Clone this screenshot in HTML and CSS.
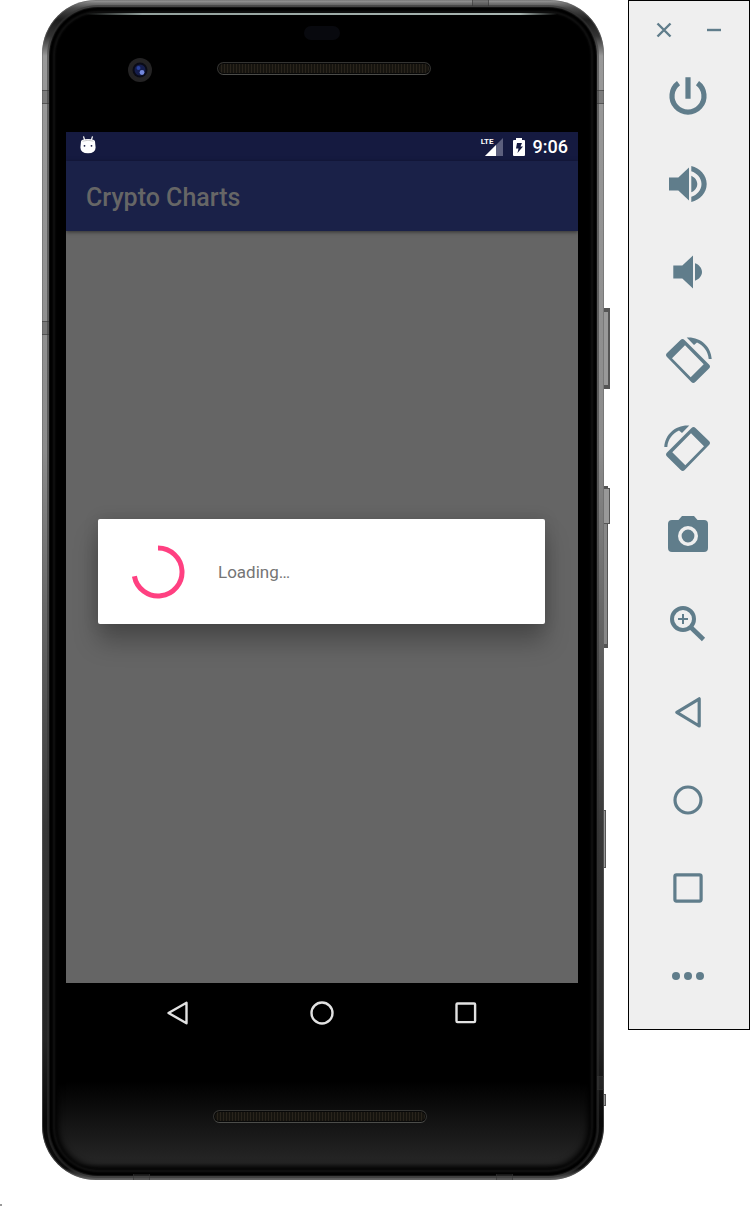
FILE: index.html
```html
<!DOCTYPE html>
<html lang="en">
<head>
<meta charset="utf-8">
<meta name="viewport" content="width=device-width, initial-scale=1">
<title>Crypto Charts</title>
<link rel="stylesheet" href="styles.css">
</head>
<body>
<main class="desk">
  <section class="phone" aria-label="Phone">
    <span class="side-key power-key"></span>
    <span class="side-key volume-key"></span>
    <span class="side-key volume-tip"></span>
    <span class="side-key nub-upper"></span>
    <span class="side-key nub-lower"></span>
    <div class="glass">
      <div class="forehead">
        <span class="sensor"></span>
        <div class="front">
          <svg class="camera" viewBox="0 0 24 24" aria-hidden="true">
            <circle cx="12" cy="12" r="12" fill="#242324"/>
            <circle cx="12" cy="12" r="7.5" fill="#0a0b16"/>
            <circle cx="12" cy="12" r="5.5" fill="#151d4c"/>
            <circle cx="10.5" cy="10" r="2" fill="#2a429c"/>
            <circle cx="14" cy="14.5" r="2.4" fill="#7488dc"/>
          </svg>
          <span class="speaker"></span>
        </div>
      </div>
      <div class="screen">
        <div class="status">
          <svg class="robot" viewBox="0 0 16 18" aria-hidden="true">
            <path d="M3.5.3 4.600 4M12.500.3 11.400 4" stroke="#fff" stroke-width="1.200"/>
            <path d="M1 5.500Q1 3 8 3t7 2.500l.6 6Q15.500 17.300 8 17.300T.4 11.500z" fill="#fff"/>
            <path d="M2.500 5.200Q8 3.400 13.500 5.200" fill="none" stroke="#ccc" stroke-width="1"/>
            <circle cx="4.500" cy="9.800" r=".9" fill="#151a40"/><circle cx="11.500" cy="9.800" r=".9" fill="#151a40"/>
          </svg>
          <div class="signal">
            <span class="lte">LTE</span>
            <svg viewBox="0 0 18 18" aria-hidden="true"><path d="M18 0V18H0z" fill="#5c5f7d"/><path d="M11 7V18H0z" fill="#fff"/></svg>
          </div>
          <svg class="battery" viewBox="0 0 12 18" aria-hidden="true">
            <path d="M3 0h6v2h2q1 0 1 1v14q0 1-1 1H1q-1 0-1-1V3q0-1 1-1h2z" fill="#fff"/>
            <path d="M4 5h5L7.500 8.500H10L4.500 15l1-4.500H3z" fill="#151a40"/>
          </svg>
          <span class="clock">9:06</span>
        </div>
        <header class="appbar"><h1>Crypto Charts</h1></header>
        <div class="content">
          <div class="dialog" role="dialog" aria-label="Loading">
            <svg class="spinner" viewBox="0 0 54 54" aria-hidden="true"><path d="M27 3A24 24 0 1 1 3.400 31.200" fill="none" stroke="#ff4081" stroke-width="5"/></svg>
            <p>Loading…</p>
          </div>
        </div>
        <nav class="keys" aria-label="Navigation">
          <button type="button" aria-label="Back"><svg viewBox="0 0 24 24"><path d="M2.500 12 20.500 1.800V22.200z"/></svg></button>
          <button type="button" aria-label="Home"><svg viewBox="0 0 24 24"><circle cx="12" cy="12" r="10.500"/></svg></button>
          <button type="button" aria-label="Recent apps"><svg viewBox="0 0 24 24"><rect x="2.500" y="2.500" width="18.600" height="18.600" rx="1"/></svg></button>
        </nav>
      </div>
      <div class="chin"><span class="speaker"></span></div>
    </div>
    <span class="band band-left-top"></span>
    <span class="band band-left-mid"></span>
    <span class="band band-right-top"></span>
    <span class="band band-right-low"></span>
    <span class="band band-top-right"></span>
    <span class="band band-bottom-left"></span>
    <span class="band band-bottom-right"></span>
  </section>

  <aside class="tools" aria-label="Emulator controls">
    <div class="window">
      <button type="button" aria-label="Close"><svg viewBox="0 0 16 16"><path d="M1.500 1.500l13 13M14.500 1.500l-13 13"/></svg></button>
      <button type="button" aria-label="Minimize"><svg viewBox="0 0 16 16"><path d="M1 8h14"/></svg></button>
    </div>
    <div class="actions">
      <button type="button" aria-label="Power"><svg viewBox="0 0 48 48"><path class="line" stroke-width="5.200" d="M14.500 11.200A16 16 0 1 0 33.500 11.200M24 5.300V26.700"/></svg></button>
      <button type="button" aria-label="Volume up"><svg viewBox="0 0 48 48"><path d="M5 17.500h9.300L25 7.500v33L14.300 30.500H5zM27.300 15.700c3.500 1.500 6 4.600 6 8.300s-2.500 6.800-6 8.300zM27.300 6C36 8 42.700 15.300 42.700 24S36 40 27.300 42V36.800C33 35 37.500 30 37.500 24S33 13 27.300 11.200z"/></svg></button>
      <button type="button" aria-label="Volume down"><svg viewBox="0 0 48 48"><path d="M9.300 17.600h9L29 7.600V40.400L18.300 30.400h-9zM31 15.300c4 1.300 7 4.800 7 8.700s-3 7.400-7 8.700z"/></svg></button>
      <button type="button" aria-label="Rotate left"><svg viewBox="0 0 48 48"><path fill-rule="evenodd" d="M16.500 4Q18.500 2 20.500 4L45 28.500Q47 30.500 45 32.500L31.300 46Q29.300 48 27.300 46L3 21Q1 19 3 17zM21 9.300 8 22.300 26.700 41.300 39.700 28.300z"/><path d="M22.700 1.500C36 .5 47 10 47.700 23h-3C44 15 39.500 9.500 33 6.500L30 9z"/></svg></button>
      <button type="button" aria-label="Rotate right"><svg viewBox="0 0 48 48"><g transform="matrix(-1 0 0 1 48 0)"><path fill-rule="evenodd" d="M16.500 4Q18.500 2 20.500 4L45 28.500Q47 30.500 45 32.500L31.300 46Q29.300 48 27.300 46L3 21Q1 19 3 17zM21 9.300 8 22.300 26.700 41.300 39.700 28.300z"/><path d="M22.700 1.500C36 .5 47 10 47.700 23h-3C44 15 39.500 9.500 33 6.500L30 9z"/></g></svg></button>
      <button type="button" aria-label="Take screenshot"><svg viewBox="0 0 48 48"><path d="M8 8h6.500L18 4h12l3.500 4H40q4 0 4 4v24q0 4-4 4H8q-4 0-4-4V12q0-4 4-4z"/><circle cx="24" cy="24" r="8.200" fill="none" stroke="#efefef" stroke-width="3.600"/></svg></button>
      <button type="button" aria-label="Zoom"><svg viewBox="0 0 48 48"><circle class="line" cx="19" cy="19" r="11" stroke-width="4"/><path class="line" stroke-width="2" d="M14 19h10M19 14v10"/><path class="line" stroke-width="4.600" d="M27 27.500 39.500 39.500"/></svg></button>
      <button type="button" aria-label="Back"><svg viewBox="0 0 48 48"><path class="line" stroke-width="3.200" stroke-linejoin="round" d="M12.800 24.300 35.200 10.800V38z"/></svg></button>
      <button type="button" aria-label="Home"><svg viewBox="0 0 48 48"><circle class="line" cx="24" cy="24" r="13" stroke-width="3.200"/></svg></button>
      <button type="button" aria-label="Overview"><svg viewBox="0 0 48 48"><rect class="line" x="10.900" y="10.900" width="26.200" height="26.200" rx="1.500" stroke-width="3.200"/></svg></button>
      <button type="button" aria-label="More"><svg viewBox="0 0 48 48"><circle cx="12" cy="24" r="4"/><circle cx="24" cy="24" r="4"/><circle cx="36" cy="24" r="4"/></svg></button>
    </div>
  </aside>
</main>
<span class="speck"></span>
</body>
</html>
```

FILE: styles.css
```css
* {
  box-sizing: border-box;
}

body {
  margin: 0;
  background: #fff;
  font-family: Roboto, sans-serif;
}

button {
  display: flex;
  align-items: center;
  justify-content: center;
  padding: 0;
  border: 0;
  background: none;
}

svg {
  display: block;
}

.desk {
  display: flex;
  align-items: flex-start;
  gap: 24px;
  padding-left: 42px;
}

/* Handset body */
.phone {
  position: relative;
  display: flex;
  flex: 1;
  min-width: 0;
  min-height: calc(100vh - 26px);
  padding: 8px 8px 5px;
  border-radius: 54px;
  background: linear-gradient(#a3a3a3 0, #777 3px, #4a4a4a 8px, #1c1c1c 20px, #333 36px, #999 56px, #8c8c8c 38%, #666 52%, #383838 70%, #242424 88%, #080808 95%, #0c0c0c 99%, #666 100%);
  box-shadow: inset 0 0 0 1px #66666688;
}

.glass {
  display: flex;
  flex: 1;
  flex-direction: column;
  min-width: 0;
  padding: 0 18px 0 16px;
  border-radius: 48px;
  background: linear-gradient(#000 0, #000 92%, #161616 96%, #262626 99%, #050505 100%);
  box-shadow: 0 0 0 1px #111, 0 0 0 3px #33333388, inset 0 0 2px 3px #000, inset 0 0 2px 5px #141414, inset 0 0 6px 8px #000;
}

.forehead {
  display: flex;
  flex-direction: column;
  align-items: center;
  height: 124px;
  background: linear-gradient(90deg, #0000, #93a19d 12%, #a9b6b2 92%, #0000) center 5px / 92% 2px no-repeat;
}

.sensor {
  width: 36px;
  height: 14px;
  margin: 18px 0;
  border-radius: 7px;
  background: #08090e;
}

.front {
  display: grid;
  grid-template-columns: 1fr auto 1fr;
  align-items: center;
  width: 100%;
  padding-left: 4px;
}

.camera {
  width: 24px;
  margin-left: 58px;
}

.speaker {
  width: 214px;
  height: 13px;
  border: 1px solid #343432;
  border-bottom-color: #4c4d4a;
  border-radius: 7px;
  background: repeating-linear-gradient(90deg, #29241c 0, #29241c 1px, #16140f 1px, #16140f 3px);
  box-shadow: inset 0 0 0 1px #080808;
}

.front .speaker {
  margin-bottom: 4px;
}

.chin {
  display: flex;
  align-items: flex-end;
  justify-content: center;
  height: 132px;
  padding: 0 4px 52px 0;
}

/* Frame details laid over the body */
.side-key {
  position: absolute;
  left: 100%;
  border: 1px solid #555;
  border-left: 0;
  background: #999;
}

.power-key {
  top: 308px;
  width: 6px;
  height: 81px;
  border-width: 4px 2px 4px 0;
}

.volume-key {
  top: 486px;
  width: 4px;
  height: 162px;
  border-width: 4px 1px 4px 0;
  background: #888;
}

.volume-tip {
  top: 488px;
  width: 6px;
  height: 36px;
}

.nub-upper {
  top: 810px;
  width: 2px;
  height: 58px;
}

.nub-lower {
  top: 1094px;
  width: 2px;
  height: 12px;
}

.band {
  position: absolute;
  width: 7px;
  height: 14px;
  border: solid #3338;
  border-width: 1px 0;
  background: #4445;
}

.band-left-top {
  top: 90px;
  left: 0;
}

.band-left-mid {
  top: 321px;
  left: 0;
}

.band-right-top {
  top: 90px;
  right: 0;
}

.band-right-low {
  right: 0;
  bottom: 90px;
}

.band-top-right,
.band-bottom-left,
.band-bottom-right {
  width: 17px;
  height: 6px;
  border-width: 0 1px;
}

.band-top-right {
  top: 0;
  right: 115px;
}

.band-bottom-left {
  bottom: 0;
  left: 91px;
}

.band-bottom-right {
  right: 91px;
  bottom: 0;
}

/* App screen */
.screen {
  display: flex;
  flex: 1;
  flex-direction: column;
}

.status {
  display: flex;
  align-items: center;
  height: 29px;
  padding: 0 10px 0 14px;
  background: #151a40;
  color: #fff;
}

.robot {
  width: 16px;
  height: 18px;
  margin-bottom: 3px;
}

.signal {
  position: relative;
  margin-left: auto;
}

.signal svg {
  width: 18px;
  height: 18px;
}

.lte {
  position: absolute;
  top: -1px;
  right: 9px;
  font-size: 8px;
  font-weight: 700;
  line-height: 10px;
}

.battery {
  width: 12px;
  height: 18px;
  margin: 0 8px 0 10px;
}

.clock {
  font-size: 18px;
  font-weight: 500;
  line-height: 28px;
}

.appbar {
  position: relative;
  display: flex;
  align-items: center;
  height: 70px;
  padding: 4px 20px 0;
  background: #1a2148;
  box-shadow: 0 1px 4px #0008;
}

.appbar h1 {
  margin: 0;
  color: #666;
  font-size: 25px;
  font-weight: 500;
  line-height: 32px;
}

.content {
  display: flex;
  flex: 1;
  flex-direction: column;
  justify-content: center;
  padding: 0 33px 71px 32px;
  background: #656565;
}

.dialog {
  display: flex;
  align-items: center;
  gap: 33px;
  height: 105px;
  padding: 0 33px;
  border-radius: 2px;
  background: #fff;
  box-shadow: 0 18px 24px #0004, 0 0 16px #0002;
}

.spinner {
  width: 54px;
  height: 54px;
}

.dialog p {
  margin: 0;
  color: #757575;
  font-size: 17px;
  line-height: 24px;
}

.keys {
  display: flex;
  height: 60px;
  padding: 0 40px;
  background: #000;
}

.keys button {
  flex: 1;
}

.keys svg {
  width: 24px;
  height: 24px;
  fill: none;
  stroke: #e2e2e2;
  stroke-width: 2.4;
  stroke-linejoin: round;
}

/* Emulator control strip */
.tools {
  width: 122px;
  padding-bottom: 29px;
  border: 1px solid #000;
  background: #efefef;
}

.window {
  display: flex;
  justify-content: center;
  gap: 34px;
  height: 58px;
}

.window svg {
  width: 16px;
  height: 16px;
  fill: none;
  stroke: #607d8b;
  stroke-width: 2.4;
}

.actions {
  display: flex;
  flex-direction: column;
  align-items: center;
  gap: 40px;
  padding: 13px 2px 0 0;
}

.actions svg {
  width: 48px;
  height: 48px;
  fill: #607d8b;
}

.actions .line {
  fill: none;
  stroke: #607d8b;
}

.speck {
  position: fixed;
  bottom: 0;
  left: 0;
  width: 2px;
  height: 2px;
  background: #999;
}
```
